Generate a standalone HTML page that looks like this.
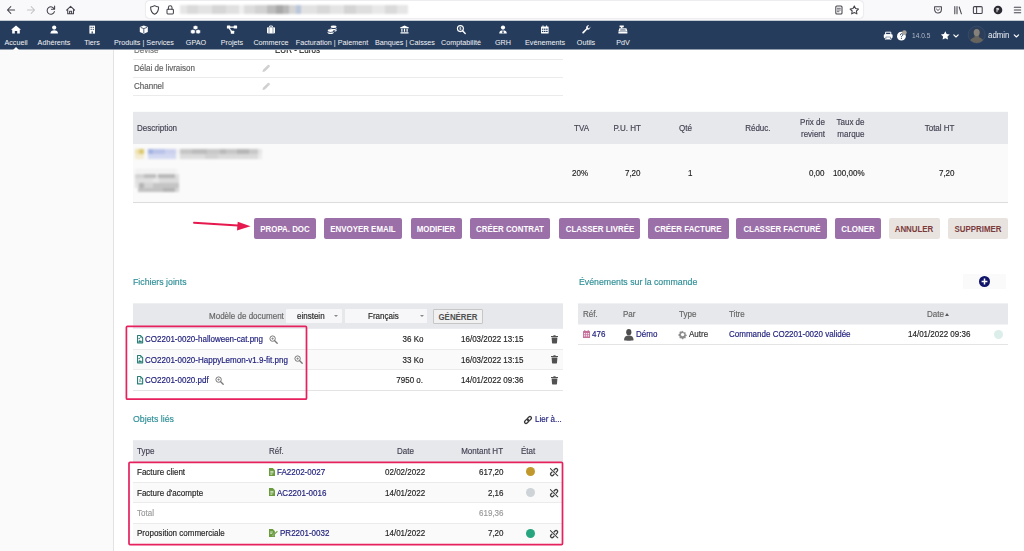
<!DOCTYPE html>
<html><head><meta charset="utf-8">
<style>
*{box-sizing:border-box;margin:0;padding:0}
html,body{width:1024px;height:551px;overflow:hidden;background:#fff}
body{font-family:"Liberation Sans",sans-serif;font-size:9px;color:#222;position:relative}
.a{position:absolute;white-space:nowrap}
.t{transform:scaleX(.89);transform-origin:0 50%;-webkit-text-stroke:.18px currentColor}
svg{position:absolute;z-index:8;overflow:visible}
#chrome{z-index:5;left:0;top:0;width:1024px;height:21px;background:#f9f9fb}
#url{z-index:6;left:146px;top:1px;width:717px;height:17px;background:#fff;border-radius:3px;box-shadow:0 0 1.5px rgba(0,0,0,.25)}
#nav{z-index:5;left:0;top:20px;width:1024px;height:30px;background:linear-gradient(#c4cad3 0 1px,#263c5c 1px 29px,#929dad 29px 30px)}
.mi{z-index:7;color:#f1f3f6;text-align:center;transform:translateX(-50%) scaleX(.89);transform-origin:50% 50%}
#side{left:0;top:49px;width:114px;height:502px;background:#fafafa;border-right:1px solid #e3e3e3}
.hl{height:1px;background:#ebebeb}
.lbl{color:#5e5e5e}
.th{color:#444455}
.td{color:#262626}
.btn{top:217.6px;height:21.4px;background:#9b70a9;border-radius:2px}
.btn.del{background:#e9e3e0}
.bt{color:#fff;font-weight:bold;text-align:center;transform:translateX(-50%) scaleX(.89);transform-origin:50% 50%}
.bt.del{color:#7b3b3b}
.ttl{color:#2f8f97}
.lnk{color:#1d1d7c}
.band{background:#e9e9ee}
.alt{background:#f9f9f9}
</style></head><body>
<div class="a" id="chrome"></div>
<div class="a" id="url"></div>
<div class="a" style="z-index:8;left:180px;top:4.500px;width:228px;height:9.500px;filter:blur(.9px);background:linear-gradient(90deg,#e6e6e6 0 3%,#dadada 3% 8%,#e3e3e3 8% 14%,#d6d6d6 14% 20%,#e0e0e0 20% 26%,#f0f0f0 26% 28%,#dcdcdc 28% 33%,#d2d2d2 33% 38%,#bcbcbc 38% 42%,#a8a8a8 42% 45%,#b8b8b8 45% 48%,#d4d4d4 48% 51%,#b9c6dc 51% 53%,#e2e2e2 53% 60%,#d8d8d8 60% 66%,#e4e4e4 66% 72%,#d4d4d4 72% 77%,#dedede 77% 84%,#e8e8e8 84% 90%,#dadada 90% 95%,#e6e6e6 95% 100%)"></div>

<svg style="left:0;top:-.5px" width="1024" height="21" viewBox="0 0 1024 21" fill="none" stroke="#44444c" stroke-width="1.050" stroke-linecap="round" stroke-linejoin="round">
<!-- back -->
<path d="M14.6 10H7.6M10.8 6.6L7.4 10l3.4 3.4"/>
<!-- forward (disabled) -->
<path d="M27.4 10h7M31.2 6.6l3.4 3.4-3.4 3.4" stroke="#c4c4c8"/>
<!-- reload -->
<path d="M54.3 9.2a3.7 3.7 0 1 0 .1 2.4M54.6 6v3.2h-3.2"/>
<!-- home -->
<path d="M66.6 10.2L70.6 6.3l4 3.9M67.7 9.4v4.4h5.8V9.4M69.6 13.8v-2.6h2v2.6"/>
<!-- shield -->
<path d="M154.6 5.6c1.4 .9 2.6 1.2 4 1.3 0 3.6-1 6-4 7.4-3-1.4-4-3.8-4-7.4 1.4-.1 2.6-.4 4-1.3z"/>
<!-- lock -->
<rect x="167" y="9.3" width="6.4" height="4.6" rx=".8"/><path d="M168.4 9.2V7.6a1.8 1.8 0 0 1 3.6 0v1.6"/>
<!-- reader -->
<rect x="835.8" y="6" width="6.2" height="8" rx="1"/><path d="M837.4 8.3h3M837.4 10h3M837.4 11.7h1.6" stroke-width=".8"/>
<!-- star -->
<path d="M854.3 5.9l1.3 2.7 2.9 .4-2.1 2 .5 2.9-2.6-1.4-2.6 1.4 .5-2.9-2.1-2 2.9-.4z"/>
<!-- pocket -->
<path d="M934.6 6.8h6.8v2.8a3.4 3.4 0 0 1-6.8 0z"/><path d="M936.4 9l1.6 1.5 1.6-1.5" stroke-width=".9"/>
<!-- library -->
<path d="M954.8 6.4v7.4M957 6.4v7.4M959.2 7l2.2 6.8"/>
<!-- sidebar -->
<rect x="973.4" y="6.6" width="8.8" height="6.8" rx="1"/><path d="M976.6 6.6v6.8"/>
<!-- account -->
<circle cx="998" cy="10" r="4.3" fill="#2b2a33" stroke="none"/><path d="M997 8.4h1.6v1.4H997.2M997 8.4v3.4" stroke="#fff" stroke-width=".8"/>
<!-- hamburger -->
<path d="M1014.3 7.2h6.4M1014.3 10h6.4M1014.3 12.8h6.4"/>
</svg>
<div class="a" id="nav"></div>
<div class="a mi" style="left:16px;top:37.4px;line-height:12px;font-size:8.1px">Accueil</div>
<div class="a mi" style="left:54.2px;top:37.4px;line-height:12px;font-size:8.1px">Adhérents</div>
<div class="a mi" style="left:92.2px;top:37.4px;line-height:12px;font-size:8.1px">Tiers</div>
<div class="a mi" style="left:143.8px;top:37.4px;line-height:12px;font-size:8.1px">Produits | Services</div>
<div class="a mi" style="left:195.5px;top:37.4px;line-height:12px;font-size:8.1px">GPAO</div>
<div class="a mi" style="left:232px;top:37.4px;line-height:12px;font-size:8.1px">Projets</div>
<div class="a mi" style="left:271px;top:37.4px;line-height:12px;font-size:8.1px">Commerce</div>
<div class="a mi" style="left:332px;top:37.4px;line-height:12px;font-size:8.1px">Facturation | Paiement</div>
<div class="a mi" style="left:404.5px;top:37.4px;line-height:12px;font-size:8.1px">Banques | Caisses</div>
<div class="a mi" style="left:461.2px;top:37.4px;line-height:12px;font-size:8.1px">Comptabilité</div>
<div class="a mi" style="left:503px;top:37.4px;line-height:12px;font-size:8.1px">GRH</div>
<div class="a mi" style="left:544.8px;top:37.4px;line-height:12px;font-size:8.1px">Evénements</div>
<div class="a mi" style="left:586px;top:37.4px;line-height:12px;font-size:8.1px">Outils</div>
<div class="a mi" style="left:622.8px;top:37.4px;line-height:12px;font-size:8.1px">PdV</div>
<div class="a" style="z-index:8;left:13px;top:47px;width:0;height:0;border-left:3px solid transparent;border-right:3px solid transparent;border-bottom:3px solid #fafafa"></div>

<svg style="left:0;top:20.700px" width="1024" height="29" viewBox="0 21 1024 29" fill="#fff" stroke="none">
<!-- home -->
<path d="M16 25.6l5 4.2h-1.2v3.8h-2.6v-2.6h-2.4v2.6h-2.6v-3.8H11z"/>
<!-- user -->
<circle cx="54.2" cy="27.6" r="2.1"/><path d="M50.4 33.6c0-2.4 1.6-3.4 3.8-3.4s3.8 1 3.8 3.4z"/>
<!-- building -->
<path d="M89.4 25.6h5.6v8h-5.6z"/><g fill="#263c5c"><rect x="90.6" y="26.8" width="1.1" height="1.1"/><rect x="92.7" y="26.8" width="1.1" height="1.1"/><rect x="90.6" y="28.8" width="1.1" height="1.1"/><rect x="92.7" y="28.8" width="1.1" height="1.1"/><rect x="91.6" y="31.4" width="1.2" height="2.2"/></g>
<!-- cube -->
<path d="M143.8 25.4l4 1.5v5l-4 1.9-4-1.9v-5z"/><path d="M140.6 27.4l3.2 1.2 3.2-1.2M143.8 28.6v4.4" stroke="#263c5c" stroke-width=".8" fill="none"/>
<!-- cubes -->
<path d="M195.5 25.4l2.3 .9v2.5l-2.3 1-2.3-1v-2.5zM192.9 29.4l2.3 .9v2.6l-2.3 1-2.3-1v-2.6zM198.1 29.4l2.3 .9v2.6l-2.3 1-2.3-1v-2.6z" stroke="#263c5c" stroke-width=".5"/>
<!-- project diagram -->
<rect x="226.900" y="25.600" width="3.400" height="3" rx=".4"/><rect x="233.700" y="25.600" width="3.400" height="3" rx=".4"/><rect x="230.800" y="30.800" width="3.400" height="3" rx=".4"/><path d="M230 27.100h4M229 28.200l3 3.600" stroke="#fff" stroke-width="1.100" fill="none"/>
<!-- suitcase -->
<rect x="267" y="27.2" width="8" height="6.2" rx=".8"/><path d="M269.6 27.2v-1.2h2.8v1.2" stroke="#fff" stroke-width=".9" fill="none"/><path d="M269 27.2v6.2M273 27.2v6.2" stroke="#263c5c" stroke-width=".5"/>
<!-- coins / invoice -->
<ellipse cx="333.6" cy="26.8" rx="3" ry="1.3"/><path d="M330.6 27.8c0 1.6 6 1.6 6 0v1c0 1.6-6 1.6-6 0z"/><ellipse cx="330.6" cy="30.6" rx="3" ry="1.3"/><path d="M327.6 31.6c0 1.6 6 1.6 6 0v1.2c0 1.6-6 1.6-6 0z"/><path d="M334.4 30.4c1.6-.1 2.2-.6 2.2-1.1v1.2c0 .6-.8 1-2.2 1.100z"/>
<!-- bank -->
<path d="M404.5 25.4l4.4 2v.8h-8.800v-.8zM401.300 28.800h1.200v3h-1.200zM403.900 28.800h1.200v3h-1.200zM406.500 28.800h1.200v3h-1.200zM400.500 32.300h8v1.300h-8z"/>
<!-- search dollar -->
<circle cx="460.400" cy="28.600" r="3" fill="none" stroke="#fff" stroke-width="1.100"/><path d="M462.600 30.800l2.600 2.600" stroke="#fff" stroke-width="1.400" stroke-linecap="round"/><path d="M460.400 26.800v3.600M461.200 27.600h-1.200a.5 .5 0 0 0 0 1h.800a.5 .5 0 0 1 0 1h-1.200" stroke="#fff" stroke-width=".5" fill="none"/>
<!-- user tie -->
<circle cx="503" cy="27.600" r="2.100"/><path d="M499.200 33.600c0-2.400 1.600-3.400 3.800-3.400s3.800 1 3.800 3.400z"/><path d="M502.400 30.300h1.200l-.2 1 .4 1.600-.8 .7-.8-.7 .4-1.600z" fill="#263c5c"/>
<!-- calendar -->
<rect x="541" y="26.400" width="7.600" height="7.200" rx=".7"/><path d="M543 25.400v1.600M546.600 25.400v1.600" stroke="#fff" stroke-width=".9"/><g fill="#263c5c"><rect x="541.900" y="28.600" width="1.500" height="1.200"/><rect x="544" y="28.600" width="1.500" height="1.200"/><rect x="546.100" y="28.600" width="1.500" height="1.200"/><rect x="541.900" y="30.800" width="1.500" height="1.200"/><rect x="544" y="30.800" width="1.500" height="1.200"/><rect x="546.100" y="30.800" width="1.500" height="1.200"/></g>
<!-- wrench -->
<path d="M590.300 26.600a2.400 2.400 0 0 1-3.100 2.900l-3.400 3.700a.9 .9 0 0 1-1.300-1.300l3.700-3.400a2.400 2.400 0 0 1 2.900-3.100l-1.400 1.400 .3 1.300 1.300 .3z"/>
<!-- cash register -->
<path d="M619.600 25.400h4.200v1.800h-4.200zM621 27.200h1.400v1h-1.400z"/><path d="M619.400 28.200h7l1 3h-9z"/><rect x="618.400" y="31.400" width="9" height="2.200" rx=".4"/><path d="M620.400 29.300h5M620.100 30.300h5.600" stroke="#263c5c" stroke-width=".5"/>
<!-- print -->
<path d="M885.600 32.200h5.200v2.600h-5.200z M885.400 36.600h5.600v2.800h-5.600z" fill="none" stroke="#fff" stroke-width="1"/><rect x="883.800" y="34.200" width="8.800" height="3.800" rx=".8"/><rect x="885.900" y="37" width="4.600" height="2.400" fill="#fff" stroke="#263c5c" stroke-width=".5"/>
<!-- help -->
<circle cx="901.400" cy="36.200" r="4.400"/><circle cx="904.400" cy="32.600" r="2.300" fill="#a9a39a"/>
<!-- star -->
<path d="M945.300 31.200l1.350 2.750 3.050 .45-2.200 2.150 .5 3.050-2.700-1.450-2.700 1.450 .5-3.050-2.200-2.150 3.050-.45z"/>
</svg>
<svg style="left:0;top:20.700px" width="1024" height="29" viewBox="0 21 1024 29" fill="none" stroke="#fff" stroke-width="1.100" stroke-linecap="round" stroke-linejoin="round">
<path d="M953.800 34.800l2.200 2.200 2.200-2.200"/>
<path d="M1014.200 34.800l2.200 2.200 2.200-2.200"/>
<path d="M900.400 34.800a1.200 1.200 0 1 1 1.700 1.100c-.5 .3-.7 .5-.7 1M901.400 38.400v.2" stroke="#263c5c" stroke-width=".9"/>
</svg>
<div class="a t" style="z-index:8;left:911.5px;top:29.8px;line-height:12px;font-size:7.4px;color:#b4bcc9;-webkit-text-stroke:0">14.0.5</div>
<svg style="left:968px;top:26.300px" width="17.400" height="17.400" viewBox="0 0 17.400 17.400"><defs><clipPath id="av"><circle cx="8.700" cy="8.700" r="8.400"/></clipPath></defs><circle cx="8.700" cy="8.700" r="8.500" fill="#2d3e59" stroke="#44587a" stroke-width=".5"/><g clip-path="url(#av)"><path d="M1.500 17.400c0-4 2.600-5.400 5-6.200v-1.600h4.400v1.600c2.400 .8 5 2.200 5 6.200z" fill="#66645d"/><ellipse cx="8.700" cy="6.600" rx="3" ry="3.700" fill="#85817a"/></g></svg>
<div class="a t" style="z-index:8;left:988px;top:29.200px;line-height:12px;font-size:8.900px;color:#eef1f5;-webkit-text-stroke:0">admin</div>
<div class="a" id="side"></div>
<div class="a t lbl" style="top:44.30px;line-height:12px;font-size:9.0px;left:134.00px;color:#777;">Devise</div>
<div class="a t td" style="top:44.00px;line-height:12px;font-size:9.0px;left:274.60px;">EUR - Euros</div>
<div class="a" style="left:133px;top:59px;width:430px;height:1px;background:#ebebeb"></div>
<div class="a t lbl" style="top:62.30px;line-height:12px;font-size:9.0px;left:134.00px;">Délai de livraison</div>
<div class="a" style="left:133px;top:77px;width:430px;height:1px;background:#ebebeb"></div>
<div class="a t lbl" style="top:80.30px;line-height:12px;font-size:9.0px;left:134.00px;">Channel</div>
<div class="a" style="left:133px;top:95px;width:430px;height:1px;background:#ebebeb"></div>
<svg style="left:262.4px;top:63.6px" width="8.600" height="8.600" viewBox="0 0 8.600 8.600"><path d="M.5 8.100l.5-2.400L5.800 .9a.9 .9 0 0 1 1.200 0l.7 .7a.9 .9 0 0 1 0 1.200L2.900 7.600z" fill="#cfcfcf"/><path d="M5.200 1.500l1.900 1.900" stroke="#e4e4e4" stroke-width=".5"/></svg>
<svg style="left:262.4px;top:81.7px" width="8.600" height="8.600" viewBox="0 0 8.600 8.600"><path d="M.5 8.100l.5-2.400L5.800 .9a.9 .9 0 0 1 1.200 0l.7 .7a.9 .9 0 0 1 0 1.200L2.900 7.600z" fill="#cfcfcf"/><path d="M5.200 1.500l1.900 1.900" stroke="#e4e4e4" stroke-width=".5"/></svg>
<svg style="left:0;top:0;z-index:auto" width="1024" height="551"><rect x="133" y="111.8" width="875" height="32.2" fill="#e7e8ec"/></svg>
<svg style="left:0;top:0;z-index:auto" width="1024" height="551"><rect x="133" y="144" width="875" height="58.3" fill="#fafafa"/></svg>
<div class="a" style="left:133px;top:202px;width:875px;height:1px;background:#dcdcdc"></div>
<div class="a t th" style="top:122.00px;line-height:12px;font-size:9.0px;left:137.00px;">Description</div>
<div class="a t th" style="top:122.00px;line-height:12px;font-size:9.0px;left:573.50px;">TVA</div>
<div class="a t th" style="top:122.00px;line-height:12px;font-size:9.0px;right:383.00px;transform-origin:100% 50%;">P.U. HT</div>
<div class="a t th" style="top:122.00px;line-height:12px;font-size:9.0px;left:678.50px;">Qté</div>
<div class="a t th" style="top:122.00px;line-height:12px;font-size:9.0px;right:253.50px;transform-origin:100% 50%;">Réduc.</div>
<div class="a t th" style="top:116.00px;line-height:12px;font-size:9.0px;right:199.40px;transform-origin:100% 50%;">Prix de</div>
<div class="a t th" style="top:127.80px;line-height:12px;font-size:9.0px;right:199.40px;transform-origin:100% 50%;">revient</div>
<div class="a t th" style="top:116.00px;line-height:12px;font-size:9.0px;right:159.90px;transform-origin:100% 50%;">Taux de</div>
<div class="a t th" style="top:127.80px;line-height:12px;font-size:9.0px;right:159.90px;transform-origin:100% 50%;">marque</div>
<div class="a t th" style="top:122.00px;line-height:12px;font-size:9.0px;right:69.80px;transform-origin:100% 50%;">Total HT</div>
<div class="a t td" style="top:166.90px;line-height:12px;font-size:9.0px;left:571.80px;">20%</div>
<div class="a t td" style="top:166.90px;line-height:12px;font-size:9.0px;right:383.00px;transform-origin:100% 50%;">7,20</div>
<div class="a t td" style="top:166.90px;line-height:12px;font-size:9.0px;left:687.60px;">1</div>
<div class="a t td" style="top:166.90px;line-height:12px;font-size:9.0px;right:199.40px;transform-origin:100% 50%;">0,00</div>
<div class="a t td" style="top:166.90px;line-height:12px;font-size:9.0px;right:159.90px;transform-origin:100% 50%;">100,00%</div>
<div class="a t td" style="top:166.90px;line-height:12px;font-size:9.0px;right:69.80px;transform-origin:100% 50%;">7,20</div>
<div class="a" style="left:0;top:0;width:300px;height:200px;filter:blur(.8px)">
<div class="a" style="left:135px;top:149px;width:127px;height:5px;background:linear-gradient(90deg,#eee3b4 0 3.500%,#ddc970 3.500% 7%,#f6f6f6 7% 10.500%,#a3b4e2 10.500% 14%,#b9c3e8 14% 24%,#cbd0ee 24% 32%,#f2f2f2 32% 35.500%,#c6c6c6 35.500% 45%,#bcbcbc 45% 57%,#c8c8c8 57% 67%,#bababa 67% 72%,#c6c6c6 72% 80%,#b6b6b6 80% 90%,#c8c8c8 90% 97%,#e6e6e6 97% 100%)"></div>
<div class="a" style="left:135px;top:153.8px;width:127px;height:4.8px;background:linear-gradient(90deg,#f3ecd0 0 7%,#f8f8f8 7% 10.500%,#d3d9f1 10.500% 32%,#f5f5f5 32% 35.500%,#dcdcdc 35.500% 55%,#d2d2d2 55% 65%,#dadada 65% 97%,#ececec 97% 100%)"></div>
<div class="a" style="left:135px;top:168.5px;width:42px;height:4px;background:#f1f1f1"></div>
<div class="a" style="left:135px;top:173.5px;width:44px;height:4.8px;background:linear-gradient(90deg,#d2d2d2 0 20%,#bdbdbd 20% 48%,#e6e6e6 48% 53%,#b8b8b8 53% 92%,#dedede 92% 100%)"></div>
<div class="a" style="left:135px;top:178.3px;width:44px;height:4.7px;background:linear-gradient(90deg,#e0e0e0 0 40%,#e8e8e8 40% 55%,#dcdcdc 55% 100%)"></div>
<div class="a" style="left:135px;top:183px;width:44px;height:5px;background:linear-gradient(90deg,#e2e2e2 0 10%,#b4b4b4 10% 20%,#d4d4d4 20% 40%,#c4c4c4 40% 100%)"></div>
<div class="a" style="left:138px;top:188px;width:41px;height:4px;background:linear-gradient(90deg,#c2c2c2 0 60%,#b4b4b4 60% 90%,#d6d6d6 90% 100%)"></div>
</div>
<div class="a btn" style="left:254px;width:62.0px"></div><div class="a bt" style="left:285.00px;top:222.6px;line-height:12px;font-size:8.9px">PROPA. DOC</div>
<div class="a btn" style="left:324.2px;width:78.0px"></div><div class="a bt" style="left:363.20px;top:222.6px;line-height:12px;font-size:8.9px">ENVOYER EMAIL</div>
<div class="a btn" style="left:410.8px;width:51.0px"></div><div class="a bt" style="left:436.30px;top:222.6px;line-height:12px;font-size:8.9px">MODIFIER</div>
<div class="a btn" style="left:470px;width:80.2px"></div><div class="a bt" style="left:510.10px;top:222.6px;line-height:12px;font-size:8.9px">CRÉER CONTRAT</div>
<div class="a btn" style="left:559px;width:81.2px"></div><div class="a bt" style="left:599.60px;top:222.6px;line-height:12px;font-size:8.9px">CLASSER LIVRÉE</div>
<div class="a btn" style="left:648px;width:80.5px"></div><div class="a bt" style="left:688.25px;top:222.6px;line-height:12px;font-size:8.9px">CRÉER FACTURE</div>
<div class="a btn" style="left:736.2px;width:90.6px"></div><div class="a bt" style="left:781.50px;top:222.6px;line-height:12px;font-size:8.9px">CLASSER FACTURÉ</div>
<div class="a btn" style="left:835px;width:46.0px"></div><div class="a bt" style="left:858.00px;top:222.6px;line-height:12px;font-size:8.9px">CLONER</div>
<div class="a btn del" style="left:888.6px;width:51.4px"></div><div class="a bt del" style="left:914.30px;top:222.6px;line-height:12px;font-size:8.9px">ANNULER</div>
<div class="a btn del" style="left:948.1px;width:59.7px"></div><div class="a bt del" style="left:977.95px;top:222.6px;line-height:12px;font-size:8.9px">SUPPRIMER</div>
<svg style="left:0;top:0" width="1024" height="551"><path d="M194 222.700L238 225.500" stroke="#e6194f" stroke-width="1.900" fill="none" stroke-linecap="round"/><path d="M250.500 226.200l-13.500 4.300 .7-8.800z" fill="#e6194f"/></svg>
<div class="a t ttl" style="top:275.80px;line-height:12px;font-size:9.85px;left:133.20px;">Fichiers joints</div>
<svg style="left:0;top:0;z-index:auto" width="1024" height="551"><rect x="133" y="303.3" width="430" height="25.5" fill="#e7e8ec"/></svg>
<div class="a t " style="top:310.00px;line-height:12px;font-size:9.0px;left:209.40px;color:#666;">Modèle de document</div>
<div class="a" style="left:286.3px;top:308.7px;width:56px;height:14.2px;background:#f7f7f9;border-radius:1px"></div>
<div class="a t td" style="top:309.80px;line-height:12px;font-size:9.0px;left:297.00px;">einstein</div>
<div class="a" style="left:344.8px;top:308.7px;width:82.7px;height:14.2px;background:#f7f7f9;border-radius:1px"></div>
<div class="a t td" style="top:309.80px;line-height:12px;font-size:9.0px;left:367.50px;">Français</div>
<div class="a" style="left:334.4px;top:314.6px;width:0;height:0;border-left:2.200px solid transparent;border-right:2.200px solid transparent;border-top:2.600px solid #888"></div>
<div class="a" style="left:419.6px;top:314.6px;width:0;height:0;border-left:2.200px solid transparent;border-right:2.200px solid transparent;border-top:2.600px solid #888"></div>
<div class="a" style="left:433.2px;top:309px;width:49.5px;height:15px;background:#f1f1f1;border:1px solid #c6c6c6;border-radius:1px"></div>
<div class="a bt" style="left:457.9px;top:310.5px;line-height:12px;font-size:8.9px;color:#505050">GÉNÉRER</div>
<div class="a" style="left:133px;top:350px;width:430px;height:19px;background:#fafafa"></div>
<div class="a t lnk" style="top:333.00px;line-height:12px;font-size:9.0px;left:145.10px;">CO2201-0020-halloween-cat.png</div>
<div class="a t td" style="top:333.00px;line-height:12px;font-size:9.0px;right:600.70px;transform-origin:100% 50%;">36 Ko</div>
<div class="a t td" style="top:333.00px;line-height:12px;font-size:9.0px;left:461.10px;">16/03/2022 13:15</div>
<svg style="left:136.900px;top:334.7px" width="6.200" height="8.400" viewBox="0 0 6.200 8.400"><path d="M.55 .55h3L5.650 2.650v5.200H.55z" fill="#fff" stroke="#2a7f78" stroke-width="1.100" stroke-linejoin="round"/><path d="M3.500 .5v2.200h2.200" fill="none" stroke="#2a7f78" stroke-width=".6"/><path d="M1.400 7v-.8l1-1.300 .9 1 .6-.6 1 1.100V7z" fill="#2a7f78"/><circle cx="2.200" cy="3.600" r=".75" fill="#2a7f78"/></svg>
<svg style="left:269.2px;top:334.6px" width="9" height="9" viewBox="0 0 9 9"><circle cx="3.600" cy="3.600" r="2.700" fill="none" stroke="#777" stroke-width="1"/><path d="M5.700 5.700l2.500 2.500" stroke="#777" stroke-width="1.300" stroke-linecap="round"/><path d="M2.400 3.600h2.400M3.600 2.400v2.400" stroke="#777" stroke-width=".7"/></svg>
<svg style="left:551.200px;top:334.8px" width="7" height="8.400" viewBox="0 0 7 8.400"><path d="M0 .9h2.200L2.600 .2h1.800l.4 .7H7v1H0z" fill="#525252"/><path d="M.6 2.400h5.800l-.4 5.400a.6 .6 0 0 1-.6 .6H1.600a.6 .6 0 0 1-.6-.6z" fill="#525252"/></svg>
<div class="a t lnk" style="top:353.50px;line-height:12px;font-size:9.0px;left:145.10px;">CO2201-0020-HappyLemon-v1.9-fit.png</div>
<div class="a t td" style="top:353.50px;line-height:12px;font-size:9.0px;right:600.70px;transform-origin:100% 50%;">33 Ko</div>
<div class="a t td" style="top:353.50px;line-height:12px;font-size:9.0px;left:461.10px;">16/03/2022 13:15</div>
<svg style="left:136.900px;top:355.2px" width="6.200" height="8.400" viewBox="0 0 6.200 8.400"><path d="M.55 .55h3L5.650 2.650v5.200H.55z" fill="#fff" stroke="#2a7f78" stroke-width="1.100" stroke-linejoin="round"/><path d="M3.500 .5v2.200h2.200" fill="none" stroke="#2a7f78" stroke-width=".6"/><path d="M1.400 7v-.8l1-1.300 .9 1 .6-.6 1 1.100V7z" fill="#2a7f78"/><circle cx="2.200" cy="3.600" r=".75" fill="#2a7f78"/></svg>
<svg style="left:294.2px;top:355.1px" width="9" height="9" viewBox="0 0 9 9"><circle cx="3.600" cy="3.600" r="2.700" fill="none" stroke="#777" stroke-width="1"/><path d="M5.700 5.700l2.500 2.500" stroke="#777" stroke-width="1.300" stroke-linecap="round"/><path d="M2.400 3.600h2.400M3.600 2.400v2.400" stroke="#777" stroke-width=".7"/></svg>
<svg style="left:551.200px;top:355.3px" width="7" height="8.400" viewBox="0 0 7 8.400"><path d="M0 .9h2.200L2.600 .2h1.800l.4 .7H7v1H0z" fill="#525252"/><path d="M.6 2.400h5.800l-.4 5.400a.6 .6 0 0 1-.6 .6H1.600a.6 .6 0 0 1-.6-.6z" fill="#525252"/></svg>
<div class="a t lnk" style="top:374.00px;line-height:12px;font-size:9.0px;left:145.10px;">CO2201-0020.pdf</div>
<div class="a t td" style="top:374.00px;line-height:12px;font-size:9.0px;right:600.70px;transform-origin:100% 50%;">7950 o.</div>
<div class="a t td" style="top:374.00px;line-height:12px;font-size:9.0px;left:461.10px;">14/01/2022 09:36</div>
<svg style="left:136.900px;top:375.7px" width="6.200" height="8.400" viewBox="0 0 6.200 8.400"><path d="M.55 .55h3L5.650 2.650v5.200H.55z" fill="#fff" stroke="#2a7f78" stroke-width="1.100" stroke-linejoin="round"/><path d="M3.500 .5v2.200h2.200" fill="none" stroke="#2a7f78" stroke-width=".6"/><path d="M1.700 6.600c1-.6 1.600-2 1.400-3.200-.3-.3-.6 .6 .2 1.800 .5 .6 1.300 .8 1.600 .5" fill="none" stroke="#2a7f78" stroke-width=".55"/></svg>
<svg style="left:214.9px;top:375.6px" width="9" height="9" viewBox="0 0 9 9"><circle cx="3.600" cy="3.600" r="2.700" fill="none" stroke="#777" stroke-width="1"/><path d="M5.700 5.700l2.500 2.500" stroke="#777" stroke-width="1.300" stroke-linecap="round"/><path d="M2.400 3.600h2.400M3.600 2.400v2.400" stroke="#777" stroke-width=".7"/></svg>
<svg style="left:551.200px;top:375.8px" width="7" height="8.400" viewBox="0 0 7 8.400"><path d="M0 .9h2.200L2.600 .2h1.800l.4 .7H7v1H0z" fill="#525252"/><path d="M.6 2.400h5.800l-.4 5.400a.6 .6 0 0 1-.6 .6H1.600a.6 .6 0 0 1-.6-.6z" fill="#525252"/></svg>
<div class="a" style="left:133px;top:349.2px;width:430px;height:1px;background:#ebebeb"></div>
<div class="a" style="left:133px;top:369px;width:430px;height:1px;background:#ebebeb"></div>
<div class="a" style="left:133px;top:390.3px;width:430px;height:1px;background:#e4e4e4"></div>
<svg style="left:0;top:0" width="1024" height="551"><rect x="126.4" y="326.4" width="180.1" height="72.8" rx="1" fill="none" stroke="#e6215e" stroke-width="1.7"/><rect x="129.0" y="462.3" width="433.5" height="82.3" rx="1" fill="none" stroke="#e6215e" stroke-width="1.7"/></svg>
<div class="a t ttl" style="top:412.80px;line-height:12px;font-size:9.85px;left:133.20px;">Objets liés</div>
<svg style="left:524.100px;top:415.900px" width="8" height="8" viewBox="0 0 8 8" fill="none" stroke="#3a3a3a" stroke-width="1.300"><g transform="rotate(-45 4 4)"><rect x="-.3" y="2.500" width="4.800" height="3" rx="1.500"/><rect x="3.500" y="2.500" width="4.800" height="3" rx="1.500"/></g></svg>
<div class="a t lnk" style="top:413.00px;line-height:12px;font-size:9.0px;left:534.80px;">Lier à...</div>
<svg style="left:0;top:0;z-index:auto" width="1024" height="551"><rect x="133" y="440.2" width="430" height="21.8" fill="#e7e8ec"/></svg>
<div class="a t th" style="top:445.10px;line-height:12px;font-size:9.0px;left:137.20px;">Type</div>
<div class="a t th" style="top:445.10px;line-height:12px;font-size:9.0px;left:269.00px;">Réf.</div>
<div class="a t th" style="top:445.10px;line-height:12px;font-size:9.0px;left:396.60px;">Date</div>
<div class="a t th" style="top:445.10px;line-height:12px;font-size:9.0px;right:520.90px;transform-origin:100% 50%;">Montant HT</div>
<div class="a t th" style="top:445.10px;line-height:12px;font-size:9.0px;left:520.90px;">État</div>
<div class="a" style="left:133px;top:483px;width:430px;height:19.4px;background:#fafafa"></div>
<div class="a" style="left:133px;top:524px;width:430px;height:20px;background:#fafafa"></div>
<div class="a" style="left:133px;top:482px;width:430px;height:1px;background:#ebebeb"></div>
<div class="a" style="left:133px;top:502.4px;width:430px;height:1px;background:#ebebeb"></div>
<div class="a" style="left:133px;top:523.4px;width:430px;height:1px;background:#ebebeb"></div>
<div class="a t td" style="top:465.80px;line-height:12px;font-size:9.0px;left:137.00px;">Facture client</div>
<svg style="left:269px;top:467.6px" width="6" height="8" viewBox="0 0 6 8"><path d="M0 0h3.800L6 2.200V8H0z" fill="#6a9c3e"/><path d="M1.300 3.400h3.200M1.300 4.800h3.200M1.300 6.200h2" stroke="#fff" stroke-width=".7"/></svg>
<div class="a t lnk" style="top:465.80px;line-height:12px;font-size:9.0px;left:277.20px;">FA2202-0027</div>
<div class="a t td" style="top:465.80px;line-height:12px;font-size:9.0px;left:385.20px;">02/02/2022</div>
<div class="a t td" style="top:465.80px;line-height:12px;font-size:9.0px;right:520.90px;transform-origin:100% 50%;">617,20</div>
<div class="a" style="left:525.8px;top:467.2px;width:9.2px;height:9.2px;border-radius:50%;background:#c0982b"></div>
<svg style="left:550px;top:468.2px" width="8.200" height="8.200" viewBox="0 0 8 8" fill="none" stroke="#3c3c3c" stroke-width="1.250"><g transform="rotate(-45 4 4)"><rect x="-.3" y="2.500" width="4.800" height="3" rx="1.500"/><rect x="3.500" y="2.500" width="4.800" height="3" rx="1.500"/></g><path d="M.5 .7l7 6.800" stroke="#fff" stroke-width="2"/><path d="M.4 .6l7.200 7" stroke-width="1" stroke-linecap="round"/></svg>
<div class="a t td" style="top:486.50px;line-height:12px;font-size:9.0px;left:137.00px;">Facture d'acompte</div>
<svg style="left:269px;top:488.3px" width="6" height="8" viewBox="0 0 6 8"><path d="M0 0h3.800L6 2.200V8H0z" fill="#6a9c3e"/><path d="M1.300 3.400h3.200M1.300 4.800h3.200M1.300 6.200h2" stroke="#fff" stroke-width=".7"/></svg>
<div class="a t lnk" style="top:486.50px;line-height:12px;font-size:9.0px;left:277.20px;">AC2201-0016</div>
<div class="a t td" style="top:486.50px;line-height:12px;font-size:9.0px;left:385.20px;">14/01/2022</div>
<div class="a t td" style="top:486.50px;line-height:12px;font-size:9.0px;right:520.90px;transform-origin:100% 50%;">2,16</div>
<div class="a" style="left:525.8px;top:487.9px;width:9.2px;height:9.2px;border-radius:50%;background:#cdd3d6"></div>
<svg style="left:550px;top:488.9px" width="8.200" height="8.200" viewBox="0 0 8 8" fill="none" stroke="#3c3c3c" stroke-width="1.250"><g transform="rotate(-45 4 4)"><rect x="-.3" y="2.500" width="4.800" height="3" rx="1.500"/><rect x="3.500" y="2.500" width="4.800" height="3" rx="1.500"/></g><path d="M.5 .7l7 6.800" stroke="#fff" stroke-width="2"/><path d="M.4 .6l7.200 7" stroke-width="1" stroke-linecap="round"/></svg>
<div class="a t td" style="top:527.30px;line-height:12px;font-size:9.0px;left:137.00px;">Proposition commerciale</div>
<svg style="left:269px;top:529.0999999999999px" width="9.500" height="8" viewBox="0 0 9.500 8"><path d="M0 0h3.800L6 2.200V8H0z" fill="#6a9c3e"/><path d="M1.200 3h2.600M1.200 4.400h2" stroke="#fff" stroke-width=".7"/><path d="M3.600 6.800l1.200-.2L9 2.600 8 1.700 3.900 5.700z" fill="#5b8c30" stroke="#fff" stroke-width=".3"/></svg>
<div class="a t lnk" style="top:527.30px;line-height:12px;font-size:9.0px;left:280.30px;">PR2201-0032</div>
<div class="a t td" style="top:527.30px;line-height:12px;font-size:9.0px;left:385.20px;">14/01/2022</div>
<div class="a t td" style="top:527.30px;line-height:12px;font-size:9.0px;right:520.90px;transform-origin:100% 50%;">7,20</div>
<div class="a" style="left:525.8px;top:528.6999999999999px;width:9.2px;height:9.2px;border-radius:50%;background:#27a57e"></div>
<svg style="left:550px;top:529.6999999999999px" width="8.200" height="8.200" viewBox="0 0 8 8" fill="none" stroke="#3c3c3c" stroke-width="1.250"><g transform="rotate(-45 4 4)"><rect x="-.3" y="2.500" width="4.800" height="3" rx="1.500"/><rect x="3.500" y="2.500" width="4.800" height="3" rx="1.500"/></g><path d="M.5 .7l7 6.800" stroke="#fff" stroke-width="2"/><path d="M.4 .6l7.200 7" stroke-width="1" stroke-linecap="round"/></svg>
<div class="a t " style="top:507.10px;line-height:12px;font-size:9.0px;left:137.00px;color:#9a9a9a;">Total</div>
<div class="a t " style="top:507.10px;line-height:12px;font-size:9.0px;right:520.90px;transform-origin:100% 50%;color:#9a9a9a;">619,36</div>
<div class="a t ttl" style="top:275.70px;line-height:12px;font-size:9.85px;left:578.80px;">Événements sur la commande</div>
<div class="a" style="left:962.5px;top:274px;width:43.5px;height:15px;background:#fafafa"></div>
<svg style="left:979px;top:276.200px" width="11" height="11" viewBox="0 0 11 11"><circle cx="5.500" cy="5.500" r="5.500" fill="#10146a"/><path d="M5.500 2.600v5.800M2.600 5.500h5.800" stroke="#fff" stroke-width="1.500"/></svg>
<svg style="left:0;top:0;z-index:auto" width="1024" height="551"><rect x="578" y="303.4" width="430" height="21.1" fill="#e7e8ec"/></svg>
<div class="a t " style="top:308.10px;line-height:12px;font-size:9.0px;left:582.50px;color:#666;">Réf.</div>
<div class="a t " style="top:308.10px;line-height:12px;font-size:9.0px;left:623.30px;color:#666;">Par</div>
<div class="a t " style="top:308.10px;line-height:12px;font-size:9.0px;left:679.30px;color:#666;">Type</div>
<div class="a t " style="top:308.10px;line-height:12px;font-size:9.0px;left:728.80px;color:#666;">Titre</div>
<div class="a t " style="top:308.10px;line-height:12px;font-size:9.0px;left:926.70px;color:#666;">Date</div>
<div class="a" style="left:945.400px;top:312.800px;width:0;height:0;border-left:2.600px solid transparent;border-right:2.600px solid transparent;border-bottom:3px solid #5a5a5a"></div>
<div class="a" style="left:578px;top:344.2px;width:430px;height:1px;background:#e4e4e4"></div>
<svg style="left:582.500px;top:330.200px" width="7" height="8" viewBox="0 0 7 8"><rect x="0" y="1" width="7" height="7" rx=".6" fill="#c6709a"/><path d="M1.800 0v1.600M5.200 0v1.600" stroke="#c6709a" stroke-width="1"/><g fill="#fff"><rect x=".9" y="3.200" width="1.300" height="1.100"/><rect x="2.850" y="3.200" width="1.300" height="1.100"/><rect x="4.800" y="3.200" width="1.300" height="1.100"/><rect x=".9" y="5.300" width="1.300" height="1.100"/><rect x="2.850" y="5.300" width="1.300" height="1.100"/><rect x="4.800" y="5.300" width="1.300" height="1.100"/></g></svg>
<div class="a t lnk" style="top:328.20px;line-height:12px;font-size:9.0px;left:591.50px;">476</div>
<svg style="left:623.600px;top:328.600px" width="9.600" height="11.600" viewBox="0 0 9.600 11.600"><ellipse cx="4.800" cy="3.200" rx="2.600" ry="3.100" fill="#4d4d4d"/><path d="M0 11.200c0-3.200 2-4.600 4.800-4.600s4.800 1.400 4.800 4.600c-2 .6-7.600 .6-9.600 0z" fill="#555"/></svg>
<div class="a t lnk" style="top:327.80px;line-height:12px;font-size:9.0px;left:636.00px;">Démo</div>
<svg style="left:679.300px;top:330.900px" width="7.200" height="7.200" viewBox="0 0 8 8"><path d="M4 .2l.7 .1 .3 1 .8 .4 .9-.5 .9 .9-.5 .9 .4 .8 1 .3v1.400l-1 .3-.4 .8 .5 .9-.9 .9-.9-.5-.8 .4-.3 1H3.300l-.3-1-.8-.4-.9 .5-.9-.9 .5-.9-.4-.8-1-.3V3.300l1-.3 .4-.8-.5-.9 .9-.9 .9 .5 .8-.4 .3-1z" fill="#8c8c8c"/><circle cx="4" cy="4" r="1.900" fill="#fff"/></svg>
<div class="a t td" style="top:328.20px;line-height:12px;font-size:9.0px;left:689.30px;color:#333;">Autre</div>
<div class="a t lnk" style="top:328.20px;line-height:12px;font-size:9.0px;left:728.80px;">Commande CO2201-0020 validée</div>
<div class="a t td" style="top:328.20px;line-height:12px;font-size:9.0px;left:908.10px;">14/01/2022 09:36</div>
<div class="a" style="left:994.4px;top:329.5px;width:9px;height:9px;border-radius:50%;background:#dbeeea"></div>
</body></html>
